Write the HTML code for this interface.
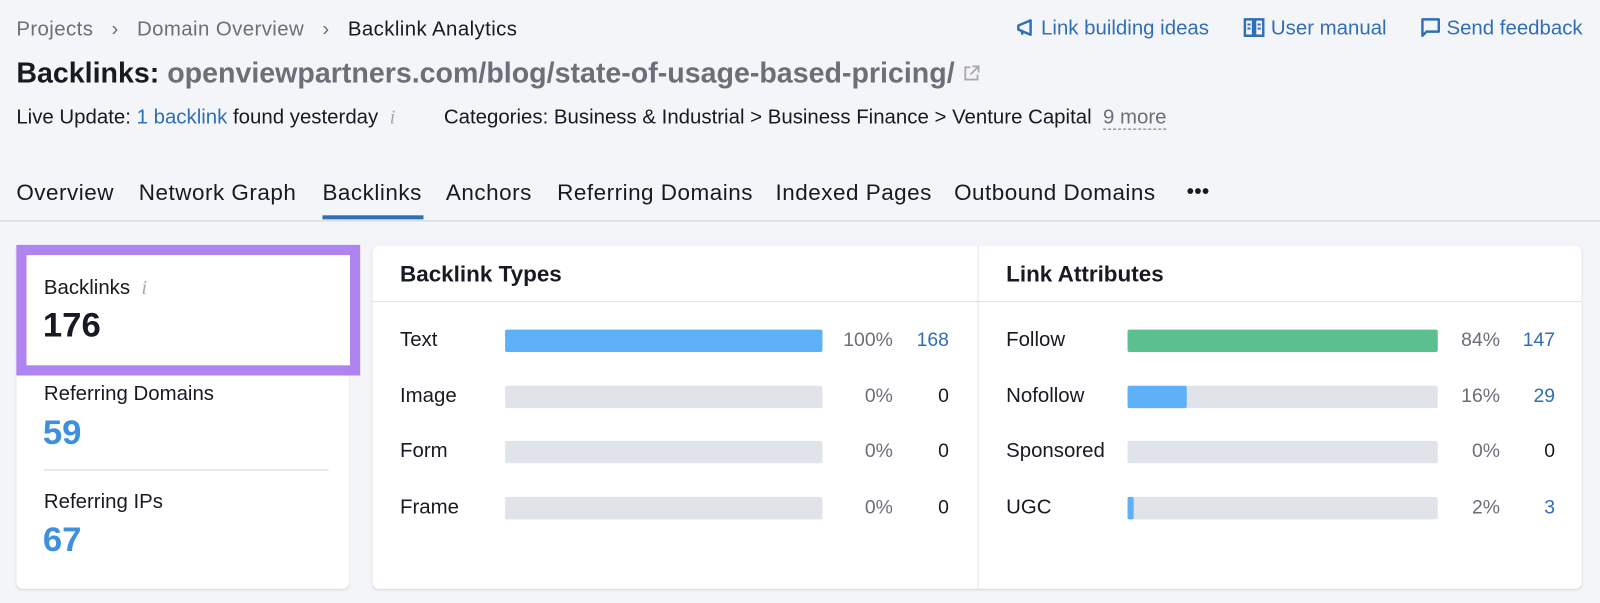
<!DOCTYPE html>
<html><head><style>
*{margin:0;padding:0;box-sizing:border-box}
body{width:1600px;height:603px;background:#f4f5f9;font-family:"Liberation Sans",sans-serif;color:#171a22;overflow:hidden}
#w{position:absolute;left:0;top:0;width:1568px;height:591px;transform:scale(1.0204);transform-origin:0 0}
.a{position:absolute;white-space:nowrap}
.blue{color:#2f6fb6}
.tab{font-size:22px;letter-spacing:0.5px;top:176px}
.card{background:#fff;border-radius:6px;box-shadow:0 1px 2px rgba(0,0,0,.12)}
.lbl{font-size:20px}
.bar{position:absolute;height:22px;background:#e1e3ea;border-radius:2px}
.bar i{display:block;height:100%;border-radius:2px}
.pct{font-size:19px;color:#6c6e79;text-align:right;width:60px}
.num{font-size:19px;text-align:right;width:40px}
</style></head><body><div id="w">
<div class="a" style="left:16px;top:18px;font-size:20px;letter-spacing:0.4px;color:#6c6e79">Projects &nbsp;&nbsp;›&nbsp;&nbsp; Domain Overview &nbsp;&nbsp;›&nbsp;&nbsp; <span style="color:#171a22">Backlink Analytics</span></div>
<div class="a blue" style="right:17px;top:17px;font-size:20px">
<svg width="20" height="18" viewBox="0 0 20 18" style="vertical-align:-2px"><path d="M3 7v4l12 5V2z M6 11l1 5" fill="none" stroke="#2f6fb6" stroke-width="2.4" stroke-linejoin="round"/></svg> Link building ideas
<span style="display:inline-block;width:22px"></span>
<svg width="22" height="20" viewBox="0 0 22 20" style="vertical-align:-3px"><path d="M2 2h8v16H2zM12 2h8v16h-8z" fill="none" stroke="#2f6fb6" stroke-width="2.4"/><path d="M4.5 7h3M4.5 11h3M14.5 7h3M14.5 11h3" stroke="#2f6fb6" stroke-width="2"/></svg> User manual
<span style="display:inline-block;width:22px"></span>
<svg width="20" height="20" viewBox="0 0 20 20" style="vertical-align:-3px"><path d="M2 2h16v12H6l-4 4z" fill="none" stroke="#2f6fb6" stroke-width="2.4" stroke-linejoin="round"/></svg> Send feedback</div>
<div class="a" style="left:16px;top:56px;font-size:28px;font-weight:bold">Backlinks: <span style="color:#6c6e79">openviewpartners.com/blog/state-of-usage-based-pricing/</span> <svg width="18" height="18" viewBox="0 0 18 18"><path d="M8 3H3v12h12v-5M10 2h6v6M16 2l-8 8" fill="none" stroke="#aaa" stroke-width="1.8"/></svg></div>
<div class="a" style="left:16px;top:104px;font-size:20px">Live Update: <span class="blue">1 backlink</span> found yesterday &nbsp;<i style="color:#aaa;font-family:'Liberation Serif'">i</i></div>
<div class="a" style="left:435px;top:104px;font-size:20px">Categories: Business &amp; Industrial &gt; Business Finance &gt; Venture Capital &nbsp;<span style="color:#6c6e79;border-bottom:1px dashed #6c6e79">9 more</span></div>
<div class="a tab" style="left:16px">Overview</div>
<div class="a tab" style="left:136px">Network Graph</div>
<div class="a tab" style="left:316px">Backlinks</div>
<div class="a" style="left:316px;top:211px;width:99px;height:4px;background:#2f6fb6"></div>
<div class="a tab" style="left:437px">Anchors</div>
<div class="a tab" style="left:546px">Referring Domains</div>
<div class="a tab" style="left:760px">Indexed Pages</div>
<div class="a tab" style="left:935px">Outbound Domains</div>
<div class="a tab" style="left:1163px;font-weight:bold;top:177px;font-size:20px">•••</div>
<div class="a" style="left:0;top:216px;width:1600px;height:1px;background:#d0d2da"></div>

<div class="a card" style="left:16px;top:240px;width:326px;height:337px"></div>
<div class="a" style="left:16px;top:240px;width:337px;height:128px;border:10px solid #b084f0;background:#fff"></div>
<div class="a lbl" style="left:43px;top:271px">Backlinks &nbsp;<i style="color:#aaa;font-family:'Liberation Serif'">i</i></div>
<div class="a" style="left:42px;top:300px;font-size:34px;font-weight:bold">176</div>
<div class="a lbl" style="left:43px;top:375px">Referring Domains</div>
<div class="a" style="left:42px;top:405px;font-size:34px;font-weight:bold;color:#3d8fe0">59</div>
<div class="a" style="left:43px;top:460px;width:279px;height:1px;background:#d0d2da"></div>
<div class="a lbl" style="left:43px;top:481px">Referring IPs</div>
<div class="a" style="left:42px;top:510px;font-size:34px;font-weight:bold;color:#3d8fe0">67</div>

<div class="a card" style="left:365px;top:241px;width:1185px;height:336px"></div>
<div class="a" style="left:958px;top:241px;width:1px;height:336px;background:#e0e2e8"></div>
<div class="a" style="left:365px;top:295px;width:1185px;height:1px;background:#e0e2e8"></div>
<div class="a" style="left:392px;top:256px;font-size:22px;font-weight:bold">Backlink Types</div>
<div class="a" style="left:986px;top:256px;font-size:22px;font-weight:bold">Link Attributes</div>

<div class="a lbl" style="left:392px;top:322px">Text</div>
<div class="bar" style="left:495px;top:323px;width:311px"><i style="width:100%;background:#5eb0f7"></i></div>
<div class="a pct" style="left:815px;top:323px">100%</div><div class="a num blue" style="left:890px;top:323px">168</div>
<div class="a lbl" style="left:392px;top:377px">Image</div>
<div class="bar" style="left:495px;top:378px;width:311px"></div>
<div class="a pct" style="left:815px;top:378px">0%</div><div class="a num" style="left:890px;top:378px">0</div>
<div class="a lbl" style="left:392px;top:431px">Form</div>
<div class="bar" style="left:495px;top:432px;width:311px"></div>
<div class="a pct" style="left:815px;top:432px">0%</div><div class="a num" style="left:890px;top:432px">0</div>
<div class="a lbl" style="left:392px;top:486px">Frame</div>
<div class="bar" style="left:495px;top:487px;width:311px"></div>
<div class="a pct" style="left:815px;top:487px">0%</div><div class="a num" style="left:890px;top:487px">0</div>

<div class="a lbl" style="left:986px;top:322px">Follow</div>
<div class="bar" style="left:1105px;top:323px;width:304px"><i style="width:100%;background:#5bbf8f"></i></div>
<div class="a pct" style="left:1410px;top:323px">84%</div><div class="a num blue" style="left:1484px;top:323px">147</div>
<div class="a lbl" style="left:986px;top:377px">Nofollow</div>
<div class="bar" style="left:1105px;top:378px;width:304px"><i style="width:58px;background:#5eb0f7"></i></div>
<div class="a pct" style="left:1410px;top:378px">16%</div><div class="a num blue" style="left:1484px;top:378px">29</div>
<div class="a lbl" style="left:986px;top:431px">Sponsored</div>
<div class="bar" style="left:1105px;top:432px;width:304px"></div>
<div class="a pct" style="left:1410px;top:432px">0%</div><div class="a num" style="left:1484px;top:432px">0</div>
<div class="a lbl" style="left:986px;top:486px">UGC</div>
<div class="bar" style="left:1105px;top:487px;width:304px"><i style="width:6px;background:#5eb0f7"></i></div>
<div class="a pct" style="left:1410px;top:487px">2%</div><div class="a num blue" style="left:1484px;top:487px">3</div>
</div></body></html>
